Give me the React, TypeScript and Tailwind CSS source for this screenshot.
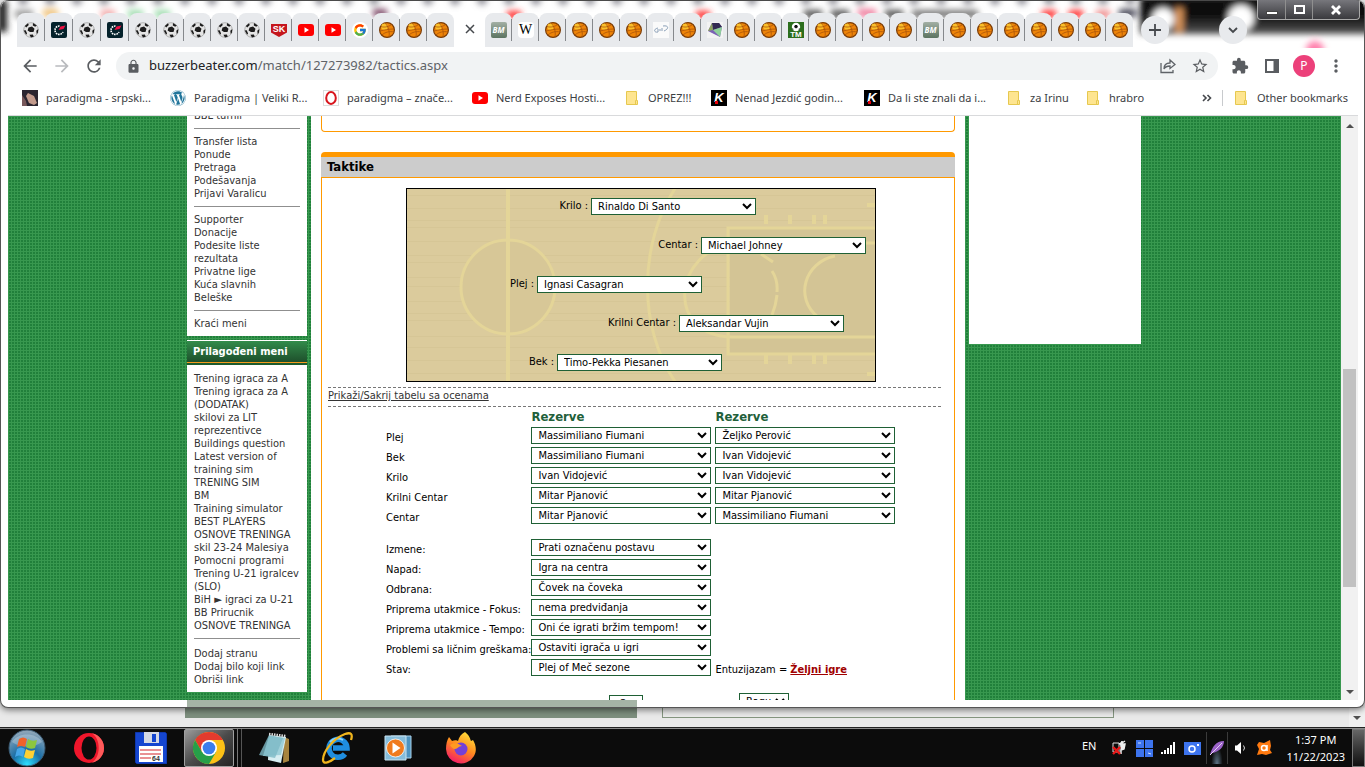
import type { ReactNode } from "react";
import clsx from "clsx";
import { MdLock, MdOutlineStarBorder, MdExtension, MdMoreVert, MdRefresh, MdArrowBack, MdArrowForward } from "react-icons/md";
import { FaWordpress } from "react-icons/fa";
import { FcGoogle } from "react-icons/fc";

type TabIcon = "soccer" | "speed" | "sk" | "youtube" | "google" | "ball" | "bm" | "wiki" | "script" | "gem" | "tm";

const leftTabs: TabIcon[] = [
  "soccer", "speed", "soccer", "speed", "soccer", "soccer", "soccer", "soccer",
  "soccer", "sk", "youtube", "youtube", "google", "ball", "ball", "ball",
];

const rightTabs: TabIcon[] = [
  "bm", "wiki", "ball", "ball", "ball", "ball", "script", "ball", "gem", "ball", "ball", "tm",
  "ball", "ball", "ball", "ball", "bm", "ball", "ball", "ball", "ball", "ball", "ball", "ball",
];

function Youtube() {
  return (
    <svg width="16" height="16" viewBox="0 0 16 16">
      <rect y="2" width="16" height="12" rx="3" fill="#f00" />
      <path d="M6.5 5.2v5.6L11 8z" fill="#fff" />
    </svg>
  );
}

function Favicon({ kind }: { kind: TabIcon }) {
  switch (kind) {
    case "google":
      return (
        <span className="flex size-4 items-center justify-center rounded-full bg-white">
          <FcGoogle size={14} />
        </span>
      );
    case "youtube":
      return <Youtube />;
    case "bm":
      return (
        <span className="flex size-4 items-center justify-center rounded-xs bg-linear-to-b from-[#a3b0a5] to-[#5c7461] text-[8px] font-bold italic text-white">
          BM
        </span>
      );
    case "wiki":
      return (
        <span className="flex size-4 items-center justify-center rounded-sm bg-white font-['Liberation_Serif',serif] text-sm text-black">
          W
        </span>
      );
    case "soccer":
      return (
        <svg width="16" height="16" viewBox="0 0 16 16">
          <circle cx="8" cy="8" r="7.3" fill="#e4e4e4" stroke="#a5a5a5" strokeWidth=".8" />
          <path d="M5.500 5.500l3.500-1 2.500 2.200-1 3.300H7L4.600 8.400zM1.800 4L5 1.200l.8 1.800-2.600 2.400zM10 1.100l3.800 2.300-1.600 1.400-2.400-1.300zM.7 8.600l2-.3 1.400 3.200-1 1.200zM15.300 7l-2 1.800.4 3.200 1.200-1.200zM6.400 12.800l3.500-.4.9 2.300-2.800.8z" fill="#1c1c1c" />
        </svg>
      );
    case "speed":
      return (
        <svg width="16" height="16" viewBox="0 0 16 16">
          <rect width="16" height="16" rx="2" fill="#04222b" />
          <path d="M8.500 4A4.200 4.200 0 1 0 12 10" fill="none" stroke="#fff" strokeWidth="1.600" strokeDasharray="1.600 .8" />
          <path d="M7.500 8l2-3.500 5-1-2 3.500z" fill="#ee1144" />
        </svg>
      );
    case "sk":
      return (
        <svg width="16" height="16" viewBox="0 0 16 16">
          <path d="M0 2h16v8.500L8 15l-8-4.500z" fill="#c5161d" />
          <text x="8" y="9.500" textAnchor="middle" fontSize="9" fontWeight="bold" fontFamily="Liberation Sans, sans-serif" fill="#fff">SK</text>
        </svg>
      );
    case "script":
      return (
        <svg width="16" height="16" viewBox="0 0 16 16">
          <rect width="16" height="16" fill="#fafafa" />
          <path d="M5 6c-5 1-4 5 0 4m0-3v3m2-3v2m2-3v3m1-5c6-1 6 3 1 5" fill="none" stroke="#8ba0b8" />
        </svg>
      );
    case "gem":
      return (
        <svg width="16" height="16" viewBox="0 0 16 16">
          <rect width="16" height="16" fill="#f3f3f3" />
          <path d="M5 1h7l3 4-2 10L1 9z" fill="#7b62b5" />
          <path d="M5 1h7l3 4-9 3z" fill="#322a52" />
          <path d="M6 8l9-3-2 10z" fill="#8fd19a" />
          <path d="M5 1L1 9l5-1z" fill="#8da35d" />
        </svg>
      );
    case "tm":
      return (
        <svg width="16" height="16" viewBox="0 0 16 16">
          <rect width="16" height="16" fill="#2c6e1d" />
          <circle cx="8" cy="5" r="4.200" fill="#fff" />
          <path d="M7 3h2l1 2-2 1.500L6 5zM4 6l1.500 1L5 8zM12 6l-1.500 1 .5 1z" fill="#111" />
          <text x="8" y="15" textAnchor="middle" fontSize="8" fontWeight="bold" fontFamily="Liberation Sans, sans-serif" fill="#fff">TM</text>
        </svg>
      );
    default:
      return (
        <svg width="16" height="16" viewBox="0 0 16 16">
          <circle cx="8" cy="8" r="7.400" fill="#ee8408" stroke="#7a3b05" strokeWidth="1.200" />
          <circle cx="5.500" cy="4.800" r="3.200" fill="#fbc02a" />
          <path d="M1 9c4-1 9-2 14-2M6 1c3 3 5 8 4 14M2 4.500C6 6 11 4 12.500 2.500M3 13c3-3 8-4 12-3" fill="none" stroke="#a9540a" strokeWidth=".8" />
        </svg>
      );
  }
}

function Tab({ icon, wide, last }: { icon: TabIcon; wide?: boolean; last?: boolean }) {
  return (
    <button
      aria-label={icon}
      className={clsx("relative flex h-[34px] items-center justify-center rounded-t-lg bg-[#e8eaed]", wide ? "w-7" : "w-[27px]")}
    >
      <Favicon kind={icon} />
      {!last && <span className="absolute right-0 top-1.5 h-[22px] w-px bg-[#85888c]" />}
    </button>
  );
}

// aero glass with the blurred desktop behind it
function Glass() {
  const dots = Array.from({ length: 42 }, (_, i) => 22 + i * 27);
  return (
    <svg className="absolute inset-0 size-full" aria-hidden="true">
      <defs>
        <filter id="soft" x="-20%" y="-20%" width="140%" height="140%"><feGaussianBlur stdDeviation="3" /></filter>
        <linearGradient id="dark" x1="0" y1="0" x2="0" y2="1">
          <stop offset="0" stopColor="#1a1a1a" />
          <stop offset=".5" stopColor="#080808" />
          <stop offset="1" stopColor="#555" />
        </linearGradient>
      </defs>
      <g filter="url(#soft)">
        {dots.map(x => <circle key={x} cx={x} cy="0" r="5" fill="#8c8c94" />)}
        <rect x="-4" y="0" width="10" height="32" fill="#222" />
        <rect x="14" y="10" width="18" height="8" fill="#999" />
        <rect x="42" y="9" width="15" height="8" fill="#efc27a" />
        <rect x="100" y="10" width="14" height="8" fill="#f2a6a6" />
        <rect x="127" y="10" width="15" height="8" fill="#9fdcae" />
        <rect x="154" y="10" width="15" height="8" fill="#9fdcae" />
        <rect x="372" y="9" width="14" height="8" fill="#7e4968" />
        <rect x="506" y="11" width="14" height="8" fill="#f33" />
        <rect x="695" y="11" width="14" height="8" fill="#f33" />
        <rect x="803" y="10" width="18" height="8" fill="#555" />
        <rect x="830" y="10" width="18" height="8" fill="#555" />
        <rect x="857" y="9" width="18" height="8" fill="#ef7f9f" />
        <rect x="884" y="10" width="18" height="8" fill="#555" />
        <rect x="911" y="10" width="66" height="8" fill="#777" />
        <rect x="1041" y="10" width="14" height="8" fill="#f33" />
        <rect x="1068" y="10" width="14" height="8" fill="#f33" />
        <rect x="1095" y="10" width="14" height="8" fill="#ef8f8f" />
        <rect x="1118" y="9" width="17" height="8" fill="#445" />
        <rect x="1139" y="-6" width="236" height="40" fill="url(#dark)" />
        <circle cx="1162" cy="19" r="11" fill="#fff" />
        <rect x="1174" y="8" width="8" height="24" fill="#d9955c" />
        <circle cx="1240" cy="18" r="13" fill="#fff" />
        <circle cx="1314" cy="50" r="9" fill="#ff7fac" />
      </g>
    </svg>
  );
}

function TabStrip() {
  return (
    <div className="relative h-12 overflow-hidden rounded-t-lg bg-white">
      <Glass />
      <div className="absolute inset-x-0 top-0 border-t border-[#4a4a4a]" />
      <div className="relative flex h-[47px] items-end pl-4">
        {leftTabs.map((icon, i) => <Tab key={i} icon={icon} wide={i < 5} last={i === leftTabs.length - 1} />)}
        <button aria-label="Close tab" className="flex h-9 w-[31px] items-center justify-center rounded-t-lg bg-white">
          <svg width="10" height="10" viewBox="0 0 10 10" stroke="#45484c" strokeWidth="1.500"><path d="M1 1l8 8M9 1L1 9" /></svg>
        </button>
        {rightTabs.map((icon, i) => <Tab key={i} icon={icon} last={i === rightTabs.length - 1} />)}
        <button aria-label="New tab" className="mb-[3px] ml-2 flex size-7 items-center justify-center rounded-full bg-[#e8eaed]">
          <svg width="12" height="12" viewBox="0 0 12 12" stroke="#45484c" strokeWidth="1.800"><path d="M6 0v12M0 6h12" /></svg>
        </button>
        <button aria-label="Search tabs" className="mb-[3px] ml-auto mr-[117px] flex size-7 items-center justify-center rounded-full bg-[#e8eaed]">
          <svg width="10" height="7" viewBox="0 0 10 7" fill="none" stroke="#45484c" strokeWidth="1.800"><path d="M1 1l4 4 4-4" /></svg>
        </button>
      </div>
      <div className="absolute right-1 top-0 flex h-5 rounded-b-sm border border-t-0 border-[#a9a9a9] bg-linear-to-b from-[#77777c] to-[#3a3a3e]">
        <button aria-label="Minimize" className="flex w-7 items-center justify-center border-r border-[#8f8f8f] pt-1.5">
          <span className="h-1 w-3 border border-[#444] bg-white" />
        </button>
        <button aria-label="Restore" className="flex w-[27px] items-center justify-center border-r border-[#8f8f8f]">
          <span className="h-[9px] w-[11px] border-2 border-white" />
        </button>
        <button aria-label="Close" className="flex w-[46px] items-center justify-center">
          <svg width="12" height="10" viewBox="0 0 12 10" stroke="#fff" strokeWidth="2.800"><path d="M2 1l8 8M10 1L2 9" /></svg>
        </button>
      </div>
    </div>
  );
}

function Toolbar() {
  return (
    <div className="flex h-9 items-center pl-3 pr-1.5 text-[#5a5d61]">
      <button aria-label="Back" className="w-8"><MdArrowBack size={20} /></button>
      <button aria-label="Forward" className="w-8 text-[#b9bbbe]"><MdArrowForward size={20} /></button>
      <button aria-label="Reload" className="w-8"><MdRefresh size={20} /></button>
      <div className="flex h-7 flex-1 items-center rounded-full bg-[#f1f3f4] pl-2.5 pr-0.5">
        <MdLock size={15} />
        <a href="#url" className="ml-2 flex-1 text-[13px] text-[#5f6368]">
          <span className="text-[#202124]">buzzerbeater.com</span>/match/127273982/tactics.aspx
        </a>
        <button aria-label="Share" className="flex w-8 justify-center">
          <svg width="16" height="16" viewBox="0 0 16 16" fill="none" stroke="#5f6368" strokeWidth="1.300">
            <path d="M1 5v9.500h12V12M4 11c0-4 2-6 6-6V2l5 4.500-5 4V8C7 8 5 9 4 11z" />
          </svg>
        </button>
        <button aria-label="Bookmark this tab" className="flex w-8 justify-center"><MdOutlineStarBorder size={18} /></button>
      </div>
      <button aria-label="Extensions" className="ml-1.5 flex w-8 justify-center"><MdExtension size={18} /></button>
      <button aria-label="Side panel" className="flex w-8 justify-center">
        <svg width="16" height="16" viewBox="0 0 16 16"><path d="M1 1h14v14H1zM3 3v10h6.500V3z" fill="#5a5d61" fillRule="evenodd" /></svg>
      </button>
      <button className="flex w-8 justify-center text-xs text-white">
        <span className="flex size-[22px] items-center justify-center rounded-full bg-[#ec407a]">P</span>
      </button>
      <button aria-label="Menu" className="flex w-8 justify-center"><MdMoreVert size={20} /></button>
    </div>
  );
}

function Folder() {
  return (
    <svg width="16" height="16" viewBox="0 0 16 16">
      <path d="M2.500 1.500h10v9h1v4h-11z" fill="#fee590" stroke="#e6c84f" />
      <path d="M11.500 14v-3.500h1" fill="none" stroke="#e6c84f" />
    </svg>
  );
}

function KMark() {
  return (
    <span className="relative flex size-4 items-center justify-center bg-black font-['Liberation_Sans',sans-serif] text-[13px] font-bold italic text-white">
      K
      <span className="absolute bottom-0.5 left-1 size-[3px] bg-red-600" />
    </span>
  );
}

const bookmarks: { label: string; width: string; icon: ReactNode }[] = [
  {
    label: "paradigma - srpski...", width: "w-[148px]",
    icon: (
      <svg width="16" height="16" viewBox="0 0 16 16">
        <rect width="16" height="16" fill="#2b2530" />
        <path d="M6 3l6 3 3 7-3 2-5-2-3-7z" fill="#c29a8c" />
        <path d="M0 5l4 6 1 5H0z" fill="#77575a" />
      </svg>
    ),
  },
  { label: "Paradigma | Veliki R...", width: "w-[153px]", icon: <FaWordpress size={16} color="#21759b" /> },
  {
    label: "paradigma – znače...", width: "w-[149px]",
    icon: (
      <svg width="16" height="16" viewBox="0 0 16 16">
        <rect x=".5" y=".5" width="15" height="15" fill="#fff" stroke="#ddd" />
        <ellipse cx="8" cy="8" rx="4.800" ry="6" fill="none" stroke="#d8151d" strokeWidth="2" />
      </svg>
    ),
  },
  { label: "Nerd Exposes Hosti...", width: "w-[152px]", icon: <Youtube /> },
  { label: "OPREZ!!!", width: "w-[87px]", icon: <Folder /> },
  { label: "Nenad Jezdić godin...", width: "w-[153px]", icon: <KMark /> },
  { label: "Da li ste znali da i...", width: "w-[142px]", icon: <KMark /> },
  { label: "za Irinu", width: "w-[79px]", icon: <Folder /> },
  { label: "hrabro", width: "w-[79px]", icon: <Folder /> },
];

function Bookmarks() {
  return (
    <nav className="flex h-8 items-center border-b border-[#d9dadc] pb-1 pl-3.5 pr-2.5 text-[11px] leading-4 text-[#3c4043]">
      {bookmarks.map(b => (
        <a key={b.label} href="#bookmark" className={clsx("flex shrink-0 items-center gap-2 whitespace-nowrap", b.width)}>
          {b.icon}
          {b.label}
        </a>
      ))}
      <button aria-label="More bookmarks" className="ml-auto mr-2.5">
        <svg width="10" height="8" viewBox="0 0 10 8" fill="none" stroke="#45484c" strokeWidth="1.600"><path d="M1 1l3 3-3 3M5.500 1l3 3-3 3" /></svg>
      </button>
      <a href="#other" className="flex items-center gap-2 border-l border-[#c8cacd] pl-2.5">
        <Folder />
        Other bookmarks
      </a>
    </nav>
  );
}

const menuTools = ["Transfer lista", "Ponude", "Pretraga", "Podešavanja", "Prijavi Varalicu"];
const menuSupport = ["Supporter", "Donacije", "Podesite liste rezultata", "Privatne lige", "Kuća slavnih", "Beleške"];
const customMenu = [
  "Trening igraca za A", "Trening igraca za A (DODATAK)", "skilovi za LIT reprezentivce", "Buildings question",
  "Latest version of training sim", "TRENING SIM", "BM", "Training simulator", "BEST PLAYERS", "OSNOVE TRENINGA",
  "skil 23-24 Malesiya", "Pomocni programi", "Trening U-21 igralcev (SLO)", "BiH ► igraci za U-21", "BB Prirucnik",
  "OSNOVE TRENINGA",
];

function MenuLinks({ items }: { items: string[] }) {
  return (
    <ul>
      {items.map((item, i) => (
        <li key={i}><a href="#menu">{item}</a></li>
      ))}
    </ul>
  );
}

function Rule() {
  return <hr className="my-1.5 border-[#8f8f8f]" />;
}

function SideMenu() {
  return (
    <aside className="w-[120px] shrink-0 leading-[13px] text-[#333]">
      <div className="-mt-[7px] bg-white px-[7px] pb-1.5">
        <MenuLinks items={["BBL turnir"]} />
        <Rule />
        <MenuLinks items={menuTools} />
        <Rule />
        <MenuLinks items={menuSupport} />
        <Rule />
        <MenuLinks items={["Kraći meni"]} />
      </div>
      <div className="mt-1 border-b-2 border-[#1d5a2c] bg-linear-to-b from-[#338f4c] to-[#1d4d2a]">
        <h2 className="h-[23px] border-b border-t border-b-[#f79a1c] border-t-white pl-1.5 font-bold leading-[21px] text-white">
          Prilagođeni meni
        </h2>
      </div>
      <div className="bg-white px-[7px] pb-1.5 pt-[7px]">
        <MenuLinks items={customMenu} />
        <Rule />
        <div className="pt-0.5">
          <MenuLinks items={["Dodaj stranu", "Dodaj bilo koji link", "Obriši link"]} />
        </div>
      </div>
    </aside>
  );
}

function Picker({ label, value, className }: { label: string; value: string; className: string }) {
  return (
    <select
      aria-label={label}
      defaultValue={value}
      className={clsx("h-[17px] border border-[#1f6035] bg-white pl-0.5 text-black", className)}
    >
      <option>{value}</option>
    </select>
  );
}

const lineup = [
  { pos: "Krilo", player: "Rinaldo Di Santo", label: "w-[184px]" },
  { pos: "Centar", player: "Michael Johney", label: "w-[294px]" },
  { pos: "Plej", player: "Ignasi Casagran", label: "w-[130px]" },
  { pos: "Krilni Centar", player: "Aleksandar Vujin", label: "w-[272px]" },
  { pos: "Bek", player: "Timo-Pekka Piesanen", label: "w-[150px]" },
];

function Court() {
  return (
    <div className="relative mx-auto h-[194px] w-[470px] border border-black bg-[#dbcb9c]">
      <svg className="absolute inset-0" width="468" height="192" viewBox="0 0 468 192" fill="none" stroke="#e4d598" strokeWidth="4">
        <g stroke="#d3c292" strokeWidth="1" opacity=".5">
          {[6, 19, 31, 38, 52, 66, 73, 88, 97, 112, 124, 131, 147, 158, 171, 184].map(y => <path key={y} d={`M0 ${y}.5h468`} />)}
        </g>
        <circle cx="101" cy="98" r="47" fill="#d7c797" strokeWidth="3" />
        <path d="M101 0v192" />
        <path d="M323 39h145v126H323z" fill="#d3c495" stroke="none" />
        <path d="M468 39H321v126h147" strokeWidth="3" />
        <path d="M269 -2C231 55 231 140 269 194" strokeWidth="3" />
        <path d="M468 54h-140C265 62 258 147 325 148h143" strokeWidth="3" />
        <path d="M354 65l12 8M365 82q6 9 5 21M370 106q-1 10-5 20M428 67c-30 6-42 42-16 62" strokeWidth="3" />
        <path d="M359 26v9M383 26v9M407 26v9M418 26v9M359 166v9M383 166v9M407 166v9M418 166v9M460 16h8M460 185h8" strokeWidth="4" />
      </svg>
      <div className="relative flex flex-col gap-[22px] pt-[9px]">
        {lineup.map(p => (
          <div key={p.pos} className="flex h-[17px] items-center">
            <span className={clsx("pr-[3px] text-right", p.label)}>{p.pos} :</span>
            <Picker label={p.pos} value={p.player} className="w-[165px]" />
          </div>
        ))}
      </div>
    </div>
  );
}

const reserves = [
  ["Plej", "Massimiliano Fiumani", "Željko Perović"],
  ["Bek", "Massimiliano Fiumani", "Ivan Vidojević"],
  ["Krilo", "Ivan Vidojević", "Ivan Vidojević"],
  ["Krilni Centar", "Mitar Pjanović", "Mitar Pjanović"],
  ["Centar", "Mitar Pjanović", "Massimiliano Fiumani"],
];

const settings = [
  ["Izmene:", "Prati označenu postavu"],
  ["Napad:", "Igra na centra"],
  ["Odbrana:", "Čovek na čoveka"],
  ["Priprema utakmice - Fokus:", "nema predviđanja"],
  ["Priprema utakmice - Tempo:", "Oni će igrati bržim tempom!"],
  ["Problemi sa ličnim greškama:", "Ostaviti igrača u igri"],
  ["Stav:", "Plej of Meč sezone"],
];

function Orders() {
  return (
    <table className="ml-[58px] border-collapse whitespace-nowrap">
      <thead>
        <tr className="h-5 text-left text-[13px] text-[#22603a]">
          <th className="w-[145px]" />
          <th className="w-[184px] p-0">Rezerve</th>
          <th className="w-[184px] p-0">Rezerve</th>
        </tr>
      </thead>
      <tbody>
        {reserves.map(([pos, first, second]) => (
          <tr key={pos} className="h-5">
            <td className="p-0 pt-0.5">{pos}</td>
            <td className="p-0 align-top"><Picker label={pos} value={first} className="block w-[180px]" /></td>
            <td className="p-0 align-top"><Picker label={pos} value={second} className="block w-[180px]" /></td>
          </tr>
        ))}
        <tr className="h-3"><td colSpan={3} /></tr>
        {settings.map(([name, value]) => (
          <tr key={name} className="h-5">
            <td className="p-0 pt-0.5">{name}</td>
            <td className="p-0 align-top"><Picker label={name} value={value} className="block w-[180px]" /></td>
            <td className="p-0 pt-0.5">
              {name === "Stav:" && (
                <>Entuzijazam = <a href="#zeljni" className="font-bold text-[#a00000] underline">Željni igre</a></>
              )}
            </td>
          </tr>
        ))}
      </tbody>
    </table>
  );
}

function TacticsPage() {
  return (
    <main className="w-[654px] shrink-0 bg-white px-2.5 text-black">
      <div className="h-4 rounded-b border border-t-0 border-[#ff9900]" />
      <h1 className="mt-5 h-[26px] rounded-t border-b border-t-[5px] border-[#ff9900] bg-[#ccc] pl-1.5 text-[13px] font-bold leading-5">
        Taktike
      </h1>
      <div className="border-x border-[#ff9900] pb-10 pl-1.5 pt-2.5">
        <Court />
        <div className="mr-[13px] mt-[5px] h-5 border-y border-dashed border-[#777] leading-4">
          <a href="#ocene" className="text-[#333] underline">Prikaži/Sakrij tabelu sa ocenama</a>
        </div>
        <Orders />
        <div className="flex pl-[281px] pt-3.5">
          <button className="mt-0.5 h-[17px] w-[34px] border border-[#1f6035] leading-4">Op</button>
          <Picker label="Postavka" value="Ragu" className="ml-24 w-[50px]" />
        </div>
      </div>
    </main>
  );
}

function PageView() {
  return (
    <div className="flex min-h-0 flex-1 overflow-hidden bg-[#f1f1f1]">
      <div className="flex flex-1 items-start justify-center overflow-hidden bg-[#21803b] bg-[linear-gradient(#38984f_1px,transparent_1px),linear-gradient(90deg,#38984f_1px,transparent_1px)] bg-size-[3px_3px] font-['DejaVu_Sans_Condensed','DejaVu_Sans',sans-serif] text-[11px]">
        <SideMenu />
        <div className="w-1 shrink-0" />
        <TacticsPage />
        <div className="ml-1 mr-[21px] h-[228px] w-[172px] shrink-0 bg-white" />
      </div>
      <div className="flex w-[17px] flex-col items-center py-1.5" aria-hidden="true">
        <svg width="8" height="4" viewBox="0 0 8 4" className="mt-0.5"><path d="M4 0l4 4H0z" fill="#505050" /></svg>
        <div className="mt-[241px] h-[218px] w-[13px] bg-[#c1c1c1]" />
        <svg width="8" height="4" viewBox="0 0 8 4" className="mt-auto"><path d="M0 0h8L4 4z" fill="#505050" /></svg>
      </div>
    </div>
  );
}

function Flag() {
  return (
    <svg width="38" height="38" viewBox="0 0 38 38">
      <defs>
        <radialGradient id="orb" cx=".5" cy=".95" r=".9">
          <stop offset="0" stopColor="#2fe0ff" />
          <stop offset=".45" stopColor="#1a6ea6" />
          <stop offset="1" stopColor="#8ba4b8" />
        </radialGradient>
      </defs>
      <circle cx="19" cy="19" r="18" fill="url(#orb)" stroke="#3b5a72" />
      <path d="M4 13C10 3 28 3 34 13 26 19 12 19 4 13z" fill="#fff" opacity=".25" />
      <path d="M11 10q4-3 8 0l-2 8q-4-2-8 0z" fill="#f0622a" />
      <path d="M20 10q4 3 9 1l-2 8q-5 2-9-1z" fill="#8cc63e" />
      <path d="M9 20q4-3 8 0l-2 8q-4-3-8 0z" fill="#45a5e8" />
      <path d="M18 20q4 3 9 1l-2 8q-5 2-9-1z" fill="#fdd034" />
    </svg>
  );
}

function OperaLogo() {
  return (
    <svg width="32" height="32" viewBox="0 0 32 32">
      <ellipse cx="16" cy="16" rx="15" ry="15" fill="#f0162b" />
      <path d="M19 1.300A15 15 0 0 1 19 30.700C28 25 28 7 19 1.300z" fill="#ff5a5a" />
      <ellipse cx="16" cy="16" rx="7.500" ry="11.500" fill="#0c0c0c" />
    </svg>
  );
}

function Floppy() {
  return (
    <svg width="32" height="32" viewBox="0 0 32 32">
      <path d="M0 0h30l2 2v30H2l-2-2z" fill="#1546d0" stroke="#0a2a8c" />
      <path d="M9 0h15v11H9z" fill="#d5d9e4" />
      <path d="M17 2h4v8h-4z" fill="#1546d0" />
      <path d="M4 14h24v16H4z" fill="#fff" />
      <path d="M5 18h21M5 22h21M5 26h11" stroke="#d3222a" strokeWidth="1.200" />
      <text x="17" y="29" fontSize="7" fontWeight="bold" fontFamily="Liberation Sans, sans-serif" fill="#333">64</text>
    </svg>
  );
}

function ChromeLogo() {
  return (
    <svg width="34" height="34" viewBox="0 0 34 34">
      <circle cx="17" cy="17" r="16" fill="#fbc116" />
      <path d="M3.100 9A16 16 0 0 1 30.900 9H17l-7 12z" fill="#e33b2e" />
      <path d="M3.100 9A16 16 0 0 0 17 33l7-12H10z" fill="#269f49" />
      <circle cx="17" cy="17" r="8" fill="#fff" />
      <circle cx="17" cy="17" r="6.300" fill="#3b7ded" />
    </svg>
  );
}

function Notepad() {
  return (
    <svg width="32" height="32" viewBox="0 0 32 32">
      <path d="M26 5l5 2v22l-6 2z" fill="#a7843f" />
      <path d="M11 3l17 2-5 26-13-3z" fill="#d7edf1" />
      <path d="M11 4l16 2-4 17-18 1z" fill="#9fd0da" />
      <path d="M11 3L1 23l16 3 8-20z" fill="#7db9c6" opacity=".8" />
      <path d="M11 2l17 2" stroke="#ddd" strokeWidth="2.500" strokeDasharray="1.500 1" />
    </svg>
  );
}

function ExplorerLogo() {
  return (
    <svg width="34" height="34" viewBox="0 0 34 34" fill="none">
      <path d="M25 23a9 9 0 1 1 2-6H13" stroke="#1f8ee0" strokeWidth="5.500" />
      <path d="M10 11a10 10 0 0 1 13-2" stroke="#8bd3ff" strokeWidth="2" />
      <path d="M31 9c2-6 0-8-6-6C14 7 3 20 3 29c0 5 7 2 12-2" stroke="#f0b51d" strokeWidth="2.300" />
    </svg>
  );
}

function MediaPlayer() {
  return (
    <svg width="28" height="28" viewBox="0 0 28 28">
      <path d="M7 2h20v22H7z" fill="#4e93bf" stroke="#a9d2ea" />
      <path d="M1 2h21v24H1z" fill="#86bddb" stroke="#c9e3f1" />
      <circle cx="11.500" cy="14" r="9" fill="#f07b1d" stroke="#fff" strokeWidth=".8" />
      <path d="M8.500 8.500v11l8-5.500z" fill="#fff" />
    </svg>
  );
}

function Firefox() {
  return (
    <svg width="32" height="32" viewBox="0 0 32 32">
      <defs>
        <linearGradient id="fox" x1=".8" y1="0" x2=".3" y2="1">
          <stop offset="0" stopColor="#ffe53b" />
          <stop offset=".5" stopColor="#ff8a1f" />
          <stop offset="1" stopColor="#f5186a" />
        </linearGradient>
      </defs>
      <path d="M20 0c5 4 5 7 6 9l2-1c3 5 4 11 1 16A15 15 0 0 1 1 17C1 12 2 8 4 5l3 4c2-1 5-1 6 0 1-4 3-7 7-9z" fill="url(#fox)" />
      <circle cx="16" cy="17" r="6.500" fill="#7540d8" />
      <path d="M5 13c4-3 8-2 12 1-4 0-4 3-7 3-2 0-4-2-5-4z" fill="#ff9a22" />
    </svg>
  );
}

function Tray() {
  return (
    <div className="ml-auto flex h-full items-center text-white">
      <button className="mb-1 mr-4 text-[11px]">EN</button>
      <svg width="16" height="16" viewBox="0 0 16 16" className="mr-2">
        <path d="M1 3h6v9H1z" fill="none" stroke="#ddd" />
        <path d="M7 4l3-1V1M10 3l3-2M8 4h5l-1 5-3 1v4" fill="#eee" stroke="#eee" strokeWidth="1.500" />
        <path d="M1 7l7 7M8 7l-7 7" stroke="#e81818" strokeWidth="2.400" />
      </svg>
      <svg width="17" height="17" viewBox="0 0 17 17" fill="#3d74ee" className="mr-2">
        <path d="M0 0h8v8H0zM9 0h8v8H9zM0 9h8v8H0zM9 9h8v8H9z" />
        <path d="M2 3h3M12 13l3 1" stroke="#cfe0ff" />
      </svg>
      <svg width="15" height="12" viewBox="0 0 15 12" fill="#fff" className="mr-2">
        <path d="M0 10h2v2H0zM3 8h2v4H3zM6 6h2v6H6zM9 3h2v9H9zM12 0h2v12h-2z" />
      </svg>
      <svg width="17" height="13" viewBox="0 0 17 13" className="mr-[5px]">
        <rect width="17" height="13" fill="#3d74ee" />
        <circle cx="8" cy="7" r="3" fill="none" stroke="#fff" strokeWidth="1.500" />
        <path d="M13 2h2v2h-2z" fill="#fff" />
      </svg>
      <span className="mr-1.5 flex h-8 w-[22px] items-center justify-center border-x border-[#3b3b3b] bg-radial-[at_50%_100%] from-[#5d7487] to-transparent to-40%">
        <svg width="16" height="16" viewBox="0 0 16 16">
          <path d="M1 15C3 7 7 1 15 1c0 6-5 11-12 12z" fill="#9c63c9" />
          <path d="M1 15L13 3" stroke="#e6d0f5" />
        </svg>
      </span>
      <svg width="14" height="14" viewBox="0 0 14 14" className="mr-2">
        <path d="M1 4.500h2L7 1v12L3 9.500H1z" fill="#fff" />
        <path d="M9.500 4.500q2 2.500 0 5" fill="none" stroke="#ddd" />
      </svg>
      <svg width="16" height="16" viewBox="0 0 16 16" className="mr-3.5">
        <path d="M3 2l5 1 6-3 1 6-1 4 2 3-6 2-4-1-5 1 2-6-2-4z" fill="#ff7a10" />
        <circle cx="8" cy="8" r="2.500" fill="none" stroke="#fff" strokeWidth="1.500" />
        <path d="M11 5v6" stroke="#fff" strokeWidth="1.500" />
      </svg>
      <div className="mr-[7px] text-center text-[11px] leading-[17px]">
        <div>1:37 PM</div>
        <div>11/22/2023</div>
      </div>
      <button aria-label="Show desktop" className="h-full w-[13px] border border-[#777] bg-linear-to-b from-[#666] to-[#111]" />
    </div>
  );
}

function Taskbar() {
  return (
    <footer className="flex h-[39px] shrink-0 items-center border-t border-[#8b8b8b] bg-[#0c0c0c] pl-2 shadow-[0_-1px_0_#222]">
      <button aria-label="Start" className="w-[65px]"><Flag /></button>
      <button aria-label="Opera" className="w-[62px]"><OperaLogo /></button>
      <button aria-label="Total Commander" className="w-[49px]"><Floppy /></button>
      <div className="flex h-full w-[74px] gap-0.5">
        <button aria-label="Chrome" className="flex w-[50px] items-center justify-center rounded-xs border border-[#a0a0a0] bg-linear-to-br from-[#9c9c9c] via-[#4b4b4b] to-[#252525]">
          <ChromeLogo />
        </button>
        <span className="w-0.5 border-r border-[#777]" />
        <span className="w-0.5 border-r border-[#555]" />
      </div>
      <button aria-label="Notepad" className="w-[62px]"><Notepad /></button>
      <button aria-label="Internet Explorer" className="w-[64px]"><ExplorerLogo /></button>
      <button aria-label="Media Player" className="w-[61px]"><MediaPlayer /></button>
      <button aria-label="Firefox"><Firefox /></button>
      <Tray />
    </footer>
  );
}

export default function App() {
  return (
    <div className="flex h-screen flex-col overflow-hidden bg-[#e9e9e9] font-['Noto_Sans','Open_Sans',sans-serif]">
      <div className="relative z-10 flex min-h-0 flex-1 flex-col rounded-lg border border-t-0 border-[#555] bg-white shadow-[0_2px_6px_rgba(0,0,0,0.5)]">
        <TabStrip />
        <div className="ml-[7px] mr-1.5 flex min-h-0 flex-1 flex-col">
          <Toolbar />
          <Bookmarks />
          <PageView />
        </div>
        <div className="flex h-[7px] shrink-0 pl-[186px]">
          <div className="w-[450px] bg-[#a5b4a6]" />
        </div>
      </div>
      <div className="flex h-5 shrink-0 pl-[185px]">
        <div className="h-2.5 w-[452px] bg-[#7d8f7e]" />
        <div className="ml-[25px] h-2.5 w-[452px] border border-t-0 border-[#84957f]" />
        <div className="ml-auto flex w-4 items-center justify-center bg-[#f0f0f0]">
          <svg width="8" height="4" viewBox="0 0 8 4"><path d="M0 0h8L4 4z" fill="#505050" /></svg>
        </div>
      </div>
      <Taskbar />
    </div>
  );
}
